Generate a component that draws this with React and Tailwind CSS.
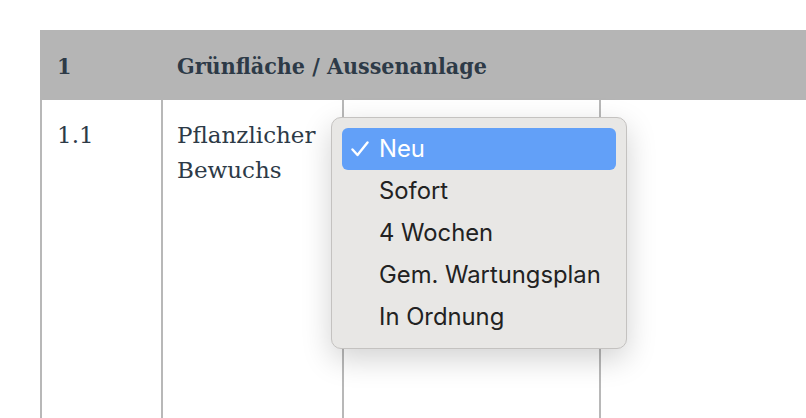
import React from 'react'

const options = ['Neu', 'Sofort', '4 Wochen', 'Gem. Wartungsplan', 'In Ordnung']

function Check() {
  return (
    <svg width="18" height="16" viewBox="0 0 18 16" fill="none" className="ml-[9px]">
      <path d="M1.5 8.5 L6.5 14 L16.5 1.5" stroke="white" strokeWidth="2.4" strokeLinecap="round" strokeLinejoin="round" />
    </svg>
  )
}

function StatusMenu() {
  return (
    <div className="absolute left-[331px] top-[117px] w-[296px] rounded-[10px] border border-[#c4c2c0] bg-[#e8e7e5] p-[10px] shadow-[0_10px_30px_rgba(0,0,0,0.18)] font-['Inter','Liberation_Sans',sans-serif] text-[23.8px] text-[#222]">
      {options.map((opt, i) => (
        <div
          key={opt}
          className={`flex h-[42px] items-center rounded-[6px] ${i === 0 ? 'bg-[#62a0f8] text-white' : ''}`}
        >
          <span className="flex w-[37px] items-center">{i === 0 && <Check />}</span>
          <span>{opt}</span>
        </div>
      ))}
    </div>
  )
}

export default function App() {
  return (
    <div className="relative h-[418px] w-[806px] overflow-hidden bg-white font-['DejaVu_Serif',serif] text-[#2d3a47]">
      <div className="pt-[30px] pl-[40px]">
        {/* Header row */}
        <div className="flex h-[70px] items-center bg-[#b5b5b5] pt-[3px] text-[23px] font-bold font-['DejaVu_Serif_Condensed','DejaVu_Serif',serif]">
          <div className="w-[121px] pl-[17px]">1</div>
          <div className="pl-[16px]">Grünfläche / Aussenanlage</div>
        </div>

        {/* Body row */}
        <div className="flex h-[318px] text-[23px] leading-[35px]">
          <div className="w-[121px] border-l-2 border-[#b8b8b8] pl-[15px] pt-[18px]">1.1</div>
          <div className="w-[181px] border-l-2 border-[#b8b8b8] pl-[14px] pt-[18px]">
            Pflanzlicher
            <br />
            Bewuchs
          </div>
          <div className="w-[257px] border-l-2 border-[#b8b8b8]"></div>
          <div className="flex-1 border-l-2 border-[#b8b8b8]"></div>
        </div>
      </div>

      <StatusMenu />
    </div>
  )
}
